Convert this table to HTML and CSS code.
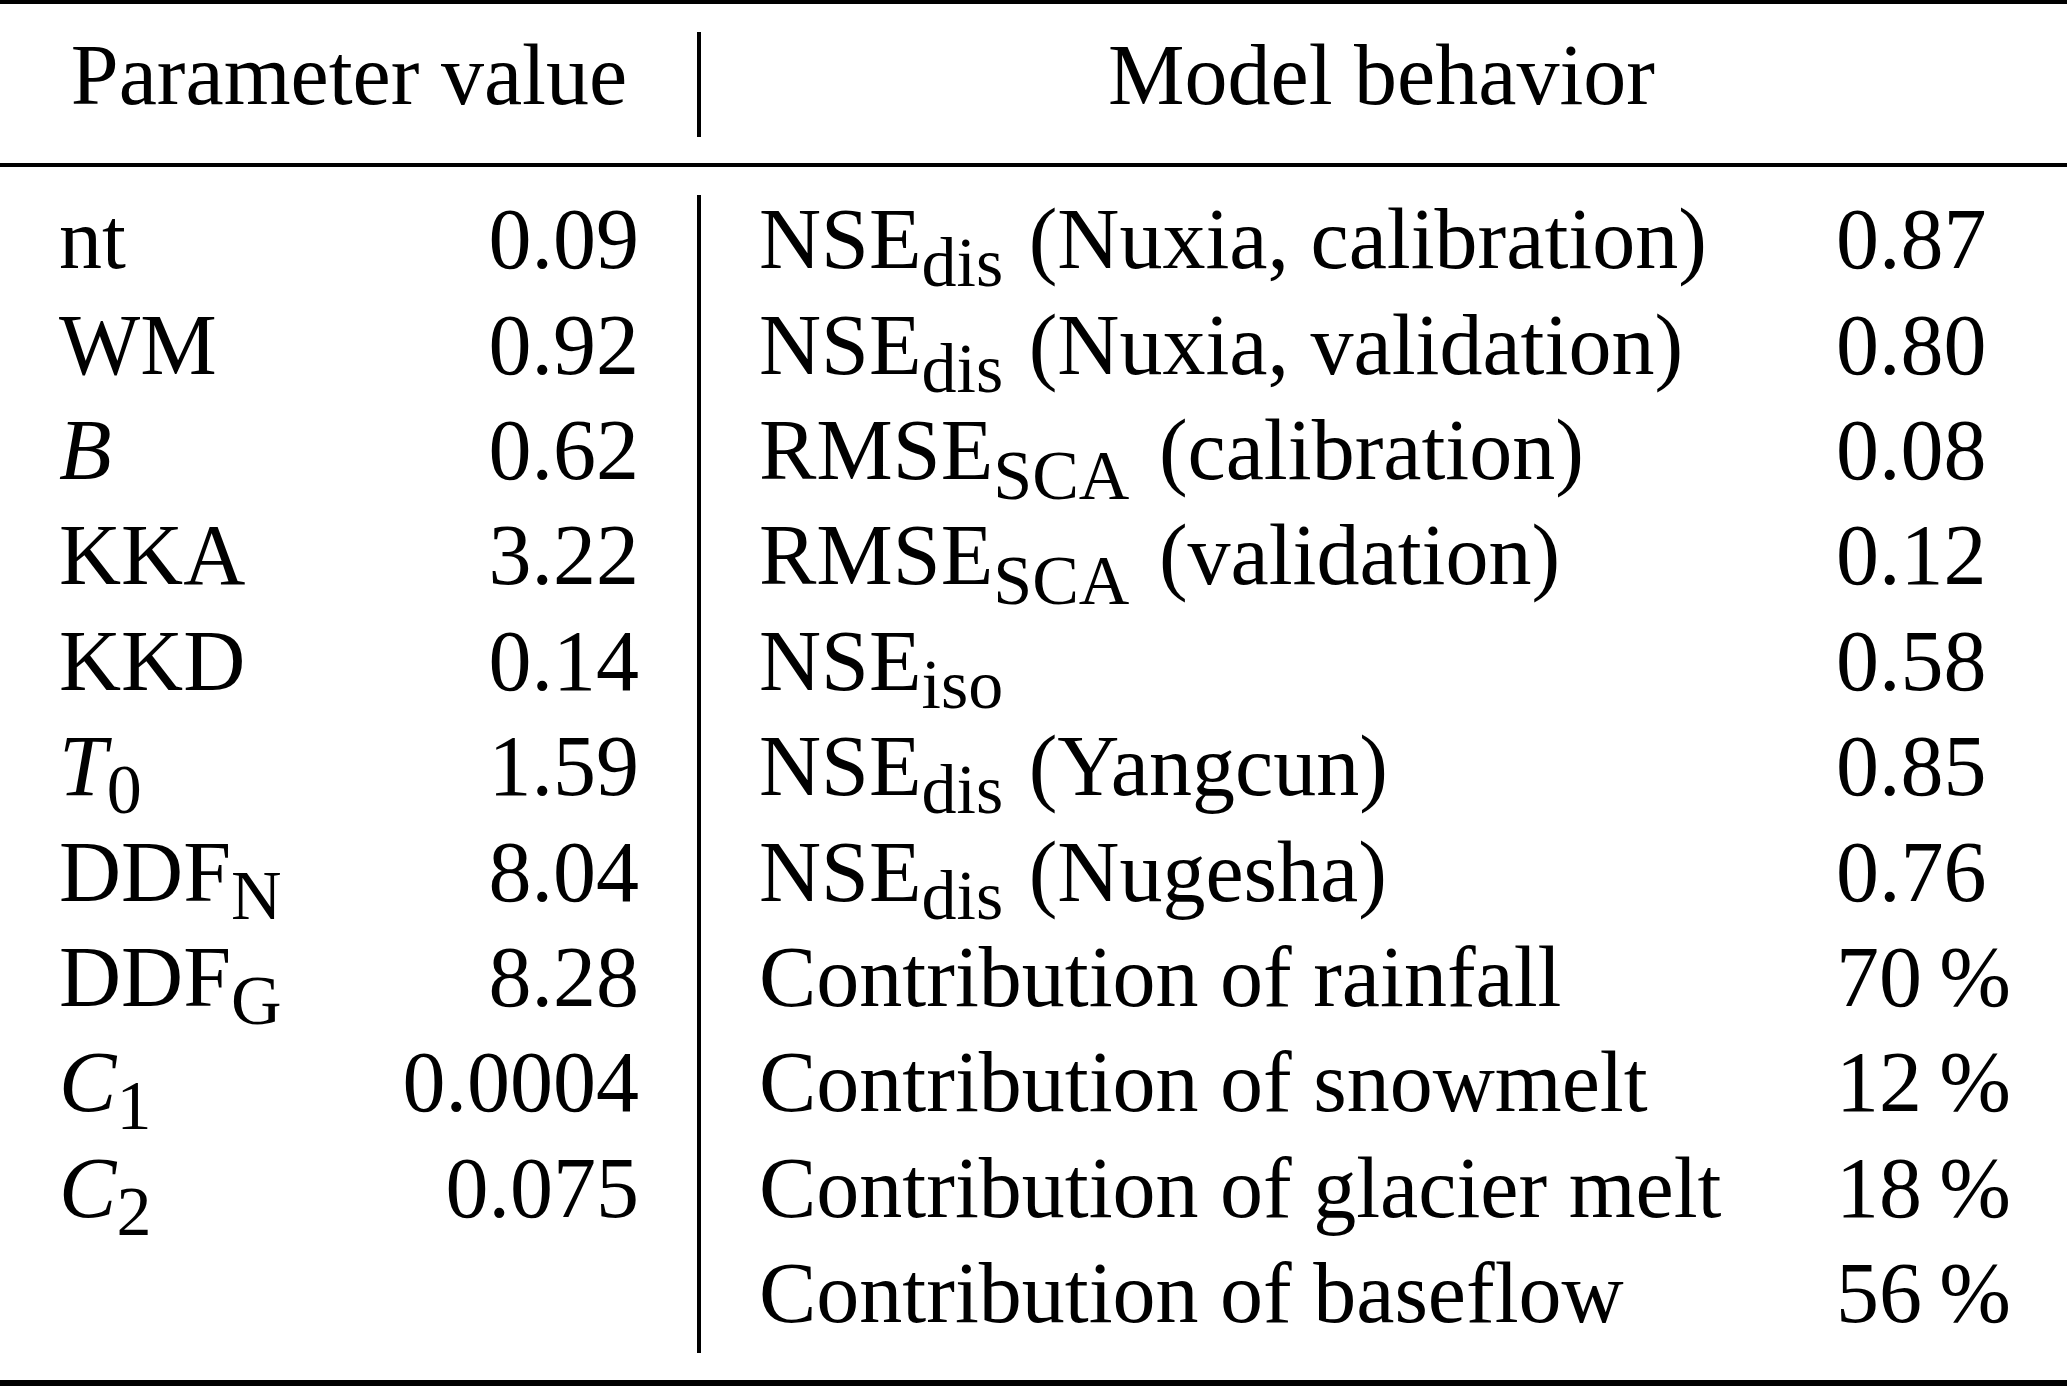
FILE: index.html
```html
<!DOCTYPE html>
<html>
<head>
<meta charset="utf-8">
<link rel="stylesheet" href="styles.css">
</head>
<body>
<div class="table">
  <div class="rule rule-top"></div>
  <div class="band head">
    <div class="panel left"><div class="hcell">Parameter value</div></div>
    <div class="vline vline-head"></div>
    <div class="panel right"><div class="hcell">Model behavior</div></div>
  </div>
  <div class="rule rule-mid"></div>
  <div class="band body">
    <div class="panel left">
      <div class="lrow"><span>nt</span><span>0.09</span></div>
      <div class="lrow"><span>WM</span><span>0.92</span></div>
      <div class="lrow"><span><i>B</i></span><span>0.62</span></div>
      <div class="lrow"><span>KKA</span><span>3.22</span></div>
      <div class="lrow"><span>KKD</span><span>0.14</span></div>
      <div class="lrow"><span><i>T</i><span class="sub">0</span></span><span>1.59</span></div>
      <div class="lrow"><span>DDF<span class="sub">N</span></span><span>8.04</span></div>
      <div class="lrow"><span>DDF<span class="sub">G</span></span><span>8.28</span></div>
      <div class="lrow"><span><i>C</i><span class="sub">1</span></span><span>0.0004</span></div>
      <div class="lrow"><span><i>C</i><span class="sub">2</span></span><span>0.075</span></div>
    </div>
    <div class="vline vline-body"></div>
    <div class="panel right">
      <div class="rrow"><span>NSE<span class="sub">dis</span> (Nuxia, calibration)</span><span>0.87</span></div>
      <div class="rrow"><span>NSE<span class="sub">dis</span> (Nuxia, validation)</span><span>0.80</span></div>
      <div class="rrow"><span>RMSE<span class="sub sub-caps">SCA</span> (calibration)</span><span>0.08</span></div>
      <div class="rrow"><span>RMSE<span class="sub sub-caps">SCA</span> (validation)</span><span>0.12</span></div>
      <div class="rrow"><span>NSE<span class="sub">iso</span></span><span>0.58</span></div>
      <div class="rrow"><span>NSE<span class="sub">dis</span> (Yangcun)</span><span>0.85</span></div>
      <div class="rrow"><span>NSE<span class="sub">dis</span> (Nugesha)</span><span>0.76</span></div>
      <div class="rrow"><span>Contribution of rainfall</span><span>70&#8201;%</span></div>
      <div class="rrow"><span>Contribution of snowmelt</span><span>12&#8201;%</span></div>
      <div class="rrow"><span>Contribution of glacier melt</span><span>18&#8201;%</span></div>
      <div class="rrow"><span>Contribution of baseflow</span><span>56&#8201;%</span></div>
    </div>
  </div>
  <div class="rule rule-bottom"></div>
</div>
</body>
</html>
```
FILE: styles.css
```css
html, body {
  margin: 0;
  padding: 0;
  background: #ffffff;
}

body {
  font-family: "Liberation Serif", "Times New Roman", serif;
  font-size: 86px;
  color: #000000;
  width: 2067px;
  height: 1386px;
  overflow: hidden;
}

.table {
  display: flex;
  flex-direction: column;
  width: 2067px;
}

.rule {
  background: #000000;
  width: 100%;
}

.rule-top { height: 4px; }
.rule-mid { height: 4px; }
.rule-bottom { height: 6px; }

.band {
  display: flex;
  align-items: stretch;
}

.panel {
  box-sizing: border-box;
}

.panel.left {
  flex: none;
  width: 697px;
  padding-left: 59px;
  padding-right: 58px;
}

.panel.right {
  flex: 1 1 0;
  min-width: 0;
  padding-left: 58px;
  padding-right: 63px;
}

.vline {
  width: 4px;
  background: #000000;
  flex: none;
}

.head .panel {
  padding-top: 19.3px;
  padding-bottom: 34.3px;
}

.hcell {
  height: 105.4px;
  line-height: 105.4px;
  text-align: center;
  white-space: nowrap;
}

.vline-head {
  margin-top: 28px;
  margin-bottom: 26px;
}

.body .panel {
  padding-top: 20.3px;
  padding-bottom: 33px;
}

.vline-body {
  margin-top: 28px;
  margin-bottom: 27px;
}

.lrow {
  display: flex;
  justify-content: space-between;
  height: 105.4px;
  line-height: 105.4px;
  white-space: nowrap;
}

.rrow {
  display: grid;
  grid-template-columns: 1077px auto;
  height: 105.4px;
  line-height: 105.4px;
  white-space: nowrap;
}

i {
  font-style: italic;
}

.sub {
  font-size: 70px;
  line-height: 0;
  vertical-align: -18px;
  margin-right: 4px;
}

.sub-caps {
  vertical-align: -20px;
  margin-right: 8px;
}
```
